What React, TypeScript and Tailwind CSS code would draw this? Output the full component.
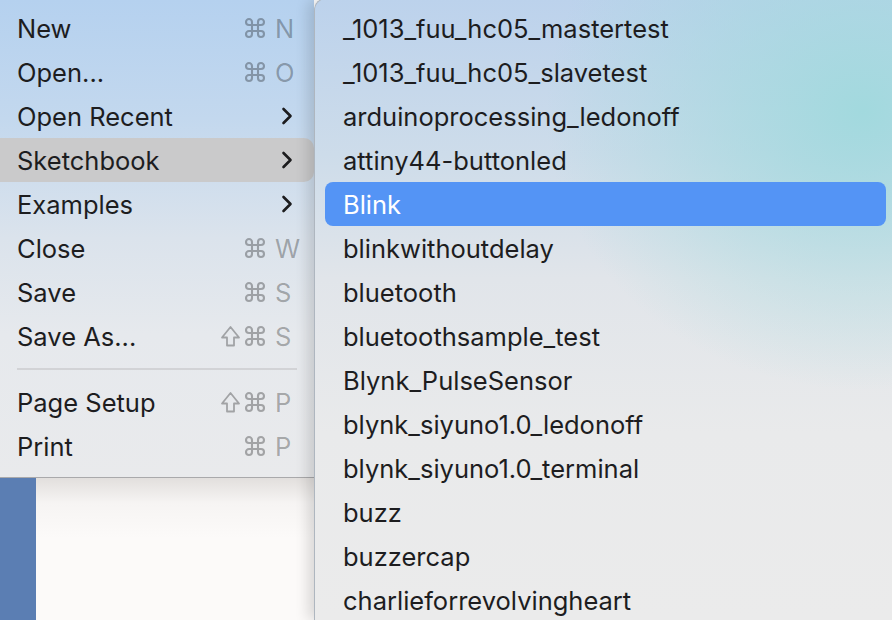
import React from "react";

type MenuRow =
  | { kind: "item"; label: string; shift?: boolean; keyName?: string; sub?: boolean; active?: boolean }
  | { kind: "sep" };

const fileMenu: MenuRow[] = [
  { kind: "item", label: "New", keyName: "N" },
  { kind: "item", label: "Open...", keyName: "O" },
  { kind: "item", label: "Open Recent", sub: true },
  { kind: "item", label: "Sketchbook", sub: true, active: true },
  { kind: "item", label: "Examples", sub: true },
  { kind: "item", label: "Close", keyName: "W" },
  { kind: "item", label: "Save", keyName: "S" },
  { kind: "item", label: "Save As...", shift: true, keyName: "S" },
  { kind: "sep" },
  { kind: "item", label: "Page Setup", shift: true, keyName: "P" },
  { kind: "item", label: "Print", keyName: "P" },
];

const sketches = [
  "_1013_fuu_hc05_mastertest",
  "_1013_fuu_hc05_slavetest",
  "arduinoprocessing_ledonoff",
  "attiny44-buttonled",
  "Blink",
  "blinkwithoutdelay",
  "bluetooth",
  "bluetoothsample_test",
  "Blynk_PulseSensor",
  "blynk_siyuno1.0_ledonoff",
  "blynk_siyuno1.0_terminal",
  "buzz",
  "buzzercap",
  "charlieforrevolvingheart",
];

const Chevron = () => (
  <svg width="12" height="20" viewBox="0 0 12 20" className="shrink-0">
    <polyline
      points="2.5,3 9.5,10 2.5,17"
      fill="none"
      stroke="#1c1c1e"
      strokeWidth="2.6"
      strokeLinecap="round"
      strokeLinejoin="round"
    />
  </svg>
);

const CmdGlyph = () => (
  <svg width="24" height="24" viewBox="0 0 24 24" className="shrink-0">
    <path
      d="M15 6v12a3 3 0 1 0 3-3H6a3 3 0 1 0 3 3V6a3 3 0 1 0-3 3h12a3 3 0 1 0-3-3"
      fill="none"
      stroke="currentColor"
      strokeWidth="2.1"
      strokeLinejoin="round"
    />
  </svg>
);

const ShiftGlyph = () => (
  <svg width="21" height="22" viewBox="0 0 21 22" className="shrink-0">
    <path
      d="M7 20.5v-8H2L10.5 2 19 12.5h-5v8z"
      fill="none"
      stroke="currentColor"
      strokeWidth="1.8"
      strokeLinejoin="round"
    />
  </svg>
);

const App: React.FC = () => {
  return (
    <div className="w-[892px] h-[620px] overflow-hidden flex font-['Inter','Liberation_Sans',sans-serif] text-[25.5px] text-[#1d1d1f] antialiased">
      {/* file menu + window behind it */}
      <div className="w-[314px] shrink-0 flex flex-col">
        <div className="h-[478px] shrink-0 pt-[6px] border-b border-[#a9a9ab] bg-[linear-gradient(to_bottom,#b5d1ef_0%,#c3d8ee_25%,#dbe3ec_50%,#e6e9ed_70%,#e9eaec_100%)]">
          {fileMenu.map((row, i) =>
            row.kind === "sep" ? (
              <div key={i} className="h-[22px] flex items-center px-[17px]">
                <div className="h-[2px] w-full bg-[#d2d3d6]" />
              </div>
            ) : (
              <div
                key={i}
                className={`h-[44px] flex items-center ml-[-10px] pl-[27px] pr-[21px] rounded-[10px] ${
                  row.active ? "bg-[#cacacb]" : ""
                }`}
              >
                <span className="flex-1 leading-none pt-[2px]">{row.label}</span>
                {row.sub && <Chevron />}
                {row.keyName && (
                  <span className="flex items-center text-black/30 leading-none">
                    {row.shift && (
                      <span className="mr-[2px]">
                        <ShiftGlyph />
                      </span>
                    )}
                    <CmdGlyph />
                    <span className="w-[18px] ml-[8px] pt-[2px]">{row.keyName}</span>
                  </span>
                )}
              </div>
            )
          )}
        </div>
        <div className="flex-1 flex">
          <div className="w-[36px] bg-[#5b7eb3]" />
          <div className="flex-1 bg-[linear-gradient(to_bottom,#e2dfdd_0%,#f6f4f3_25px,#fcfaf9_60px)]" />
        </div>
      </div>

      {/* sketchbook submenu */}
      <div className="flex-1 min-w-0 -mt-[2px] pt-[7px] pl-[10px] pr-[6px] rounded-tl-[12px] border-l border-t border-[#aeb6bf] shadow-[-6px_0_14px_rgba(0,0,0,0.14)] bg-[radial-gradient(ellipse_55%_45%_at_95%_18%,#a2d9de_0%,rgba(162,217,222,0)_100%),linear-gradient(to_bottom,#bcd2ec_0%,#cddcea_25%,#e1e5ea_45%,#e9eaeb_70%,#ebebeb_100%)]">
        {sketches.map((name) => {
          const active = name === "Blink";
          return (
            <div
              key={name}
              className={`h-[44px] flex items-center px-[18px] rounded-[8px] leading-none ${
                active ? "bg-[#5494f5] text-white" : ""
              }`}
            >
              <span className="pt-[2px]">{name}</span>
            </div>
          );
        })}
      </div>
    </div>
  );
};

export default App;
